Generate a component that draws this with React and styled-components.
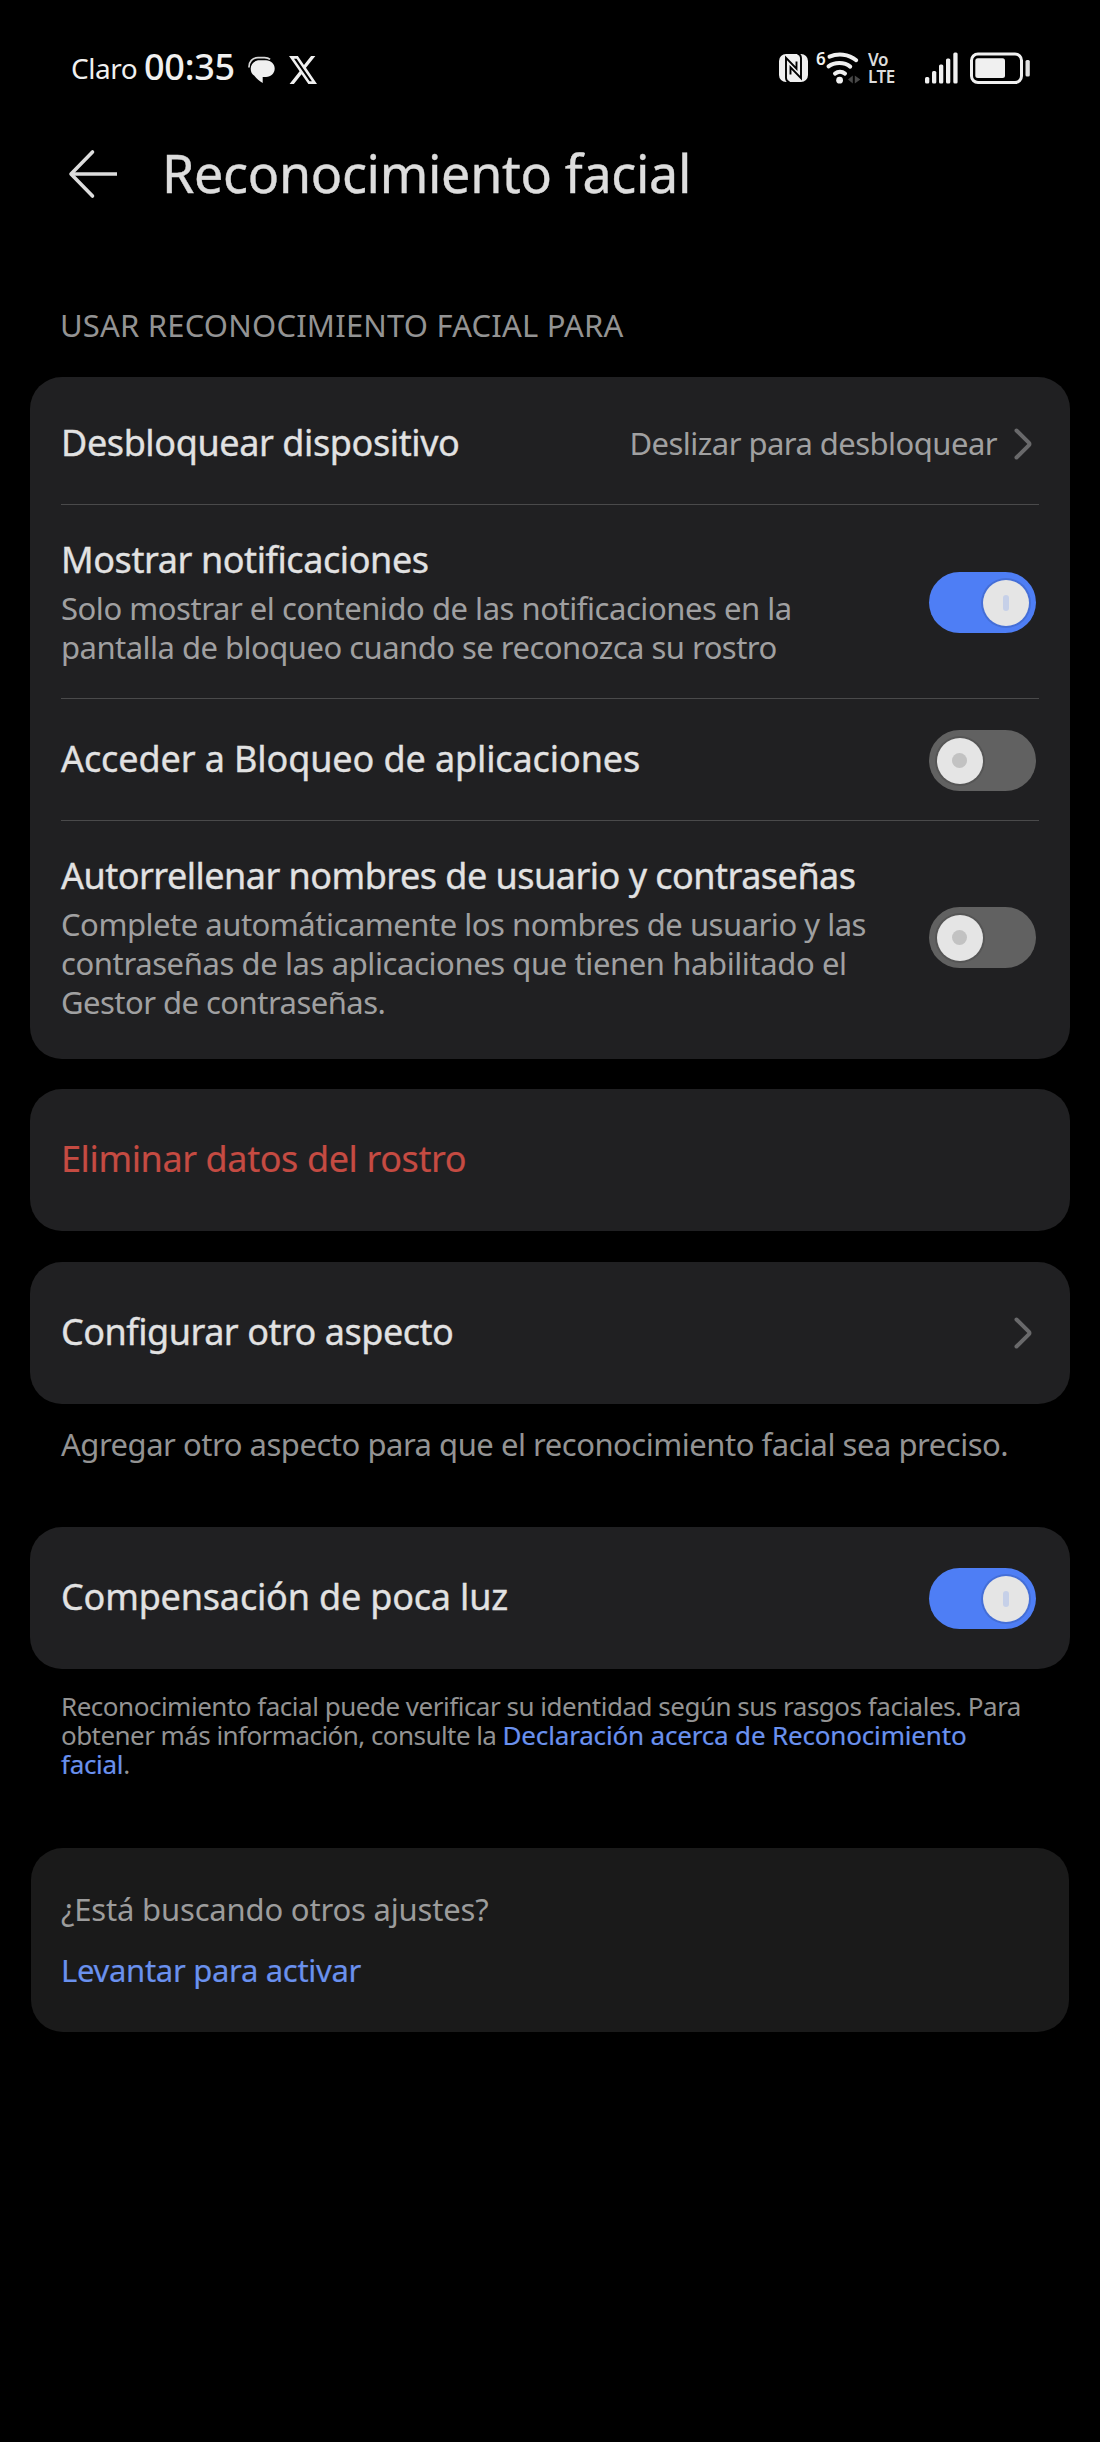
import React from 'react'
import styled, { createGlobalStyle } from 'styled-components'

const GlobalStyle = createGlobalStyle`
  body {
    margin: 0;
    background: #000000;
    font-family: "Noto Sans", "Open Sans", sans-serif;
  }
`

const Screen = styled.main`
  display: flex;
  flex-direction: column;
  width: 1100px;
  min-height: 2442px;
  background: #000000;
`

const StatusBar = styled.div`
  display: flex;
  justify-content: space-between;
  height: 136px;
  padding: 0 70px 0 71px;
  color: #f0f0f0;
`

const StatusGroup = styled.div`
  display: flex;
  align-items: center;

  svg {
    display: block;
    flex: none;
  }
`

const Carrier = styled.span`
  font-size: 28px;
  letter-spacing: -0.5px;
`

const Clock = styled.span`
  margin: -4px 13px 0 7px;
  font-size: 36px;
  font-weight: 500;
  letter-spacing: -0.3px;
`

const NotificationIcons = styled.div`
  display: flex;
  align-items: center;
  gap: 14px;
  padding-top: 3px;
`

const WifiGeneration = styled.span`
  width: 9px;
  margin: -18px 0 0 8px;
  font-size: 17px;
  font-weight: 600;
  line-height: 18px;
`

const VoLte = styled.div`
  width: 30px;
  margin: 0 27px 0 6px;
  font-size: 17px;
  font-weight: 600;
  line-height: 17px;
  letter-spacing: -0.4px;
  color: #dcdcdc;

  span {
    display: block;
  }
`

const SignalIcon = styled.svg`
  margin-right: 12px;
`

const TopBar = styled.header`
  display: flex;
  align-items: center;
  height: 75px;
  padding-left: 68px;
  color: #dddddd;
`

const PageTitle = styled.h1`
  margin: 0 0 0 43px;
  font-size: 52px;
  font-weight: 400;
  line-height: 70px;
  letter-spacing: -0.3px;
  padding-bottom: 2px;
  -webkit-text-stroke: 0.4px currentColor;
`

const SectionLabel = styled.h2`
  margin: 94px 60px 32px;
  font-size: 31px;
  font-weight: 400;
  line-height: 40px;
  letter-spacing: 0.19px;
  color: #939393;
`

const Card = styled.section`
  margin: ${p => p.$top || 0}px 30px 0;
  padding: 6px 0 7px;
  border-radius: 32px;
  background: #202022;
`

const Row = styled.div`
  display: flex;
  align-items: center;
  justify-content: space-between;
  box-sizing: border-box;
  height: ${p => p.$height || 129}px;
  padding: 0 34px 0 31px;
`

const Divider = styled.hr`
  height: 1px;
  margin: 0 31px;
  border: 0;
  background: #4a4a4b;
`

const RowTitle = styled.div`
  padding-bottom: 1px;
  font-size: 36px;
  line-height: 48px;
  letter-spacing: ${p => p.$spacing}px;
  white-space: nowrap;
  color: ${p => (p.$danger ? '#c54b42' : '#e2e2e2')};
  -webkit-text-stroke: ${p => (p.$danger ? 0.2 : 0.35)}px currentColor;
`

const RowText = styled.div`
  margin-top: 4px;
  font-size: 31px;
  line-height: 39px;
  color: #a0a0a1;
`

const Line = styled.span`
  display: block;
  letter-spacing: ${p => p.$spacing}px;
  white-space: nowrap;
`

const RowValue = styled.div`
  display: flex;
  align-items: center;
  gap: 16px;
  margin-right: 3px;
  font-size: 31px;
  line-height: 40px;
  letter-spacing: -0.54px;
  color: #a0a0a1;

  span {
    padding-bottom: 1px;
  }
`

const Track = styled.div`
  display: flex;
  align-items: center;
  justify-content: ${p => (p.$on ? 'flex-end' : 'flex-start')};
  flex: none;
  box-sizing: border-box;
  width: 107px;
  height: 61px;
  margin-top: 2px;
  padding: 0 7.5px;
  border-radius: 31px;
  background: ${p => (p.$on ? '#4e7ef5' : '#616161')};
`

const Thumb = styled.div`
  display: flex;
  align-items: center;
  justify-content: center;
  width: 46px;
  height: 46px;
  border-radius: 50%;
  background: #e5e5e5;
  box-shadow: 0 0 0 2px rgba(0, 0, 0, 0.12);

  i {
    width: ${p => (p.$on ? 6 : 15)}px;
    height: ${p => (p.$on ? 16 : 15)}px;
    border-radius: 8px;
    background: ${p => (p.$on ? '#c6d0e8' : '#c2c2c2')};
  }
`

const Hint = styled.p`
  margin: 21px 61px 63px;
  font-size: 31px;
  line-height: 39px;
  color: #939393;
`

const Legal = styled.p`
  margin: 23px 61px 69px;
  font-size: 26px;
  line-height: 29px;
  color: #939393;
`

const Link = styled.a`
  color: #6a91ee;
  letter-spacing: ${p => p.$spacing || 0}px;
  -webkit-text-stroke: 0.2px currentColor;
`

const SuggestionCard = styled.section`
  display: flex;
  flex-direction: column;
  gap: 21px;
  box-sizing: border-box;
  height: 184px;
  margin: 0 31px;
  padding: 41px 30px 0;
  border-radius: 32px;
  background: #1a1a1a;
  font-size: 31px;
  line-height: 40px;
  letter-spacing: -0.18px;
  color: #9c9c9c;
`

const Chevron = () => (
  <svg width="20" height="32" viewBox="0 0 20 32" fill="none" stroke="#69696b" strokeWidth="4" strokeLinecap="round" strokeLinejoin="round">
    <path d="M3.5 2.5L15.8 14.6Q17.2 16 15.8 17.4L3.5 29.5" />
  </svg>
)

const Toggle = ({ on }) => (
  <Track $on={on} role="switch" aria-checked={!!on}>
    <Thumb $on={on}><i /></Thumb>
  </Track>
)

const Status = () => (
  <StatusBar>
    <StatusGroup>
      <Carrier>Claro</Carrier>
      <Clock>00:35</Clock>
      <NotificationIcons>
        <svg width="27" height="28" viewBox="0 0 27 28">
          <path d="M1 11.5C.8 5.5 4.5 1.7 10 1.7h6.500c2.600 0 4.300.6 5.600 1.700" fill="none" stroke="#d8d8d8" strokeWidth="1.7" />
          <path d="M11.500 4.300h6.500c5 0 8.700 3.700 8.700 8.300 0 4.700-3.700 8.400-8.700 8.400h-3.300v6c-3-1.800-6.500-4.800-8.300-7.300C4 18.300 2.700 16 2.700 12.800c0-5 3.800-8.500 8.800-8.500z" fill="#f0f0f0" />
        </svg>
        <svg width="28" height="28" viewBox="0 1.15 24 21.7" preserveAspectRatio="none" fill="#f0f0f0">
          <path d="M18.901 1.153h3.68l-8.04 9.19L24 22.846h-7.406l-5.8-7.584-6.638 7.584H.474l8.6-9.83L0 1.154h7.594l5.243 6.932ZM17.61 20.644h2.039L6.486 3.24H4.298Z" />
        </svg>
      </NotificationIcons>
    </StatusGroup>
    <StatusGroup>
      <svg width="29" height="28" viewBox="0 0 29 28">
        <rect width="29" height="28" rx="7" fill="#f0f0f0" />
        <g fill="none" stroke="#000" strokeWidth="1.900">
          <path d="M10.500 28.500c-2.500-.8-3.500-2-3.500-4.500V3.800l10.500 10.900V7.500" />
          <path d="M18.500-.5c2.500.8 3.500 2 3.500 4.500v20.200L11.500 13.300v7.200" />
        </g>
      </svg>
      <WifiGeneration>6</WifiGeneration>
      <svg width="37" height="36" viewBox="9 0 37 36">
        <g fill="none" stroke="#f0f0f0" strokeWidth="4" strokeLinecap="round">
          <path d="M13.500 6.600C21.500 3.200 32.500 3.600 40.200 10.200" />
          <path d="M12.500 16.300C18.500 11.800 28.500 11.800 34.200 16.600" />
          <path d="M19 23.600C22 21.200 26 21.200 29 23.600" />
        </g>
        <circle cx="23.600" cy="30.200" r="3.400" fill="#f0f0f0" />
        <path d="M32 29.500l4.800-4v8zM38.800 25.500v8l5.500-4z" fill="#484848" />
      </svg>
      <VoLte>
        <span>Vo</span>
        <span>LTE</span>
      </VoLte>
      <SignalIcon width="33" height="32" viewBox="0 0 33 32" fill="#f0f0f0">
        <rect x="0" y="25" width="4.300" height="6.500" rx="1.500" />
        <rect x="7" y="19" width="4.300" height="12.500" rx="1.500" />
        <rect x="14" y="12.500" width="4.300" height="19" rx="1.500" />
        <rect x="21" y="6.500" width="4.300" height="25" rx="1.500" />
        <rect x="28.300" y="0.500" width="4.300" height="31" rx="1.500" />
      </SignalIcon>
      <svg width="60" height="32" viewBox="0 0 60 32">
        <rect x="1.500" y="2" width="50" height="28.500" rx="6.500" fill="none" stroke="#f0f0f0" strokeWidth="3" />
        <rect x="5.300" y="6.200" width="29.700" height="19.700" rx="2.500" fill="#f0f0f0" />
        <rect x="55.500" y="8" width="4.300" height="16.500" rx="1.500" fill="#e0e0e0" />
      </svg>
    </StatusGroup>
  </StatusBar>
)

const App = () => {
  return (
    <Screen>
      <GlobalStyle />
      <Status />
      <TopBar>
        <svg width="51" height="50" viewBox="0 0 51 50" fill="none" stroke="#dddddd" strokeWidth="3.600" strokeLinecap="round" strokeLinejoin="round">
          <path d="M24.500 3L3 25l21.500 22" />
          <path d="M3 25h46" strokeLinecap="butt" />
        </svg>
        <PageTitle>Reconocimiento facial</PageTitle>
      </TopBar>

      <SectionLabel>USAR RECONOCIMIENTO FACIAL PARA</SectionLabel>
      <Card>
        <Row $height={121}>
          <RowTitle $spacing={-0.4}>Desbloquear dispositivo</RowTitle>
          <RowValue>
            <span>Deslizar para desbloquear</span>
            <Chevron />
          </RowValue>
        </Row>
        <Divider />
        <Row $height={193}>
          <div>
            <RowTitle $spacing={-0.42}>Mostrar notificaciones</RowTitle>
            <RowText>
              <Line $spacing={-0.46}>Solo mostrar el contenido de las notificaciones en la</Line>
              <Line $spacing={-0.52}>pantalla de bloqueo cuando se reconozca su rostro</Line>
            </RowText>
          </div>
          <Toggle on />
        </Row>
        <Divider />
        <Row $height={121}>
          <RowTitle $spacing={-0.11}>Acceder a Bloqueo de aplicaciones</RowTitle>
          <Toggle />
        </Row>
        <Divider />
        <Row $height={231}>
          <div>
            <RowTitle $spacing={-0.52}>Autorrellenar nombres de usuario y contraseñas</RowTitle>
            <RowText>
              <Line $spacing={-0.48}>Complete automáticamente los nombres de usuario y las</Line>
              <Line $spacing={-0.4}>contraseñas de las aplicaciones que tienen habilitado el</Line>
              <Line $spacing={-0.53}>Gestor de contraseñas.</Line>
            </RowText>
          </div>
          <Toggle />
        </Row>
      </Card>

      <Card $top={30}>
        <Row>
          <RowTitle $danger $spacing={-0.4}>Eliminar datos del rostro</RowTitle>
        </Row>
      </Card>

      <Card $top={31}>
        <Row>
          <RowTitle $spacing={-0.48}>Configurar otro aspecto</RowTitle>
          <RowValue>
            <Chevron />
          </RowValue>
        </Row>
      </Card>
      <Hint>
        <Line $spacing={-0.48}>Agregar otro aspecto para que el reconocimiento facial sea preciso.</Line>
      </Hint>

      <Card>
        <Row>
          <RowTitle $spacing={-0.18}>Compensación de poca luz</RowTitle>
          <Toggle on />
        </Row>
      </Card>
      <Legal>
        <Line $spacing={-0.49}>Reconocimiento facial puede verificar su identidad según sus rasgos faciales. Para</Line>
        <Line $spacing={-0.56}>
          obtener más información, consulte la <Link $spacing={-0.17}>Declaración acerca de Reconocimiento</Link>
        </Line>
        <Line $spacing={-0.3}>
          <Link $spacing={-0.3}>facial</Link>.
        </Line>
      </Legal>

      <SuggestionCard>
        <span>¿Está buscando otros ajustes?</span>
        <Link $spacing={-0.3}>Levantar para activar</Link>
      </SuggestionCard>
    </Screen>
  )
}

export default App
